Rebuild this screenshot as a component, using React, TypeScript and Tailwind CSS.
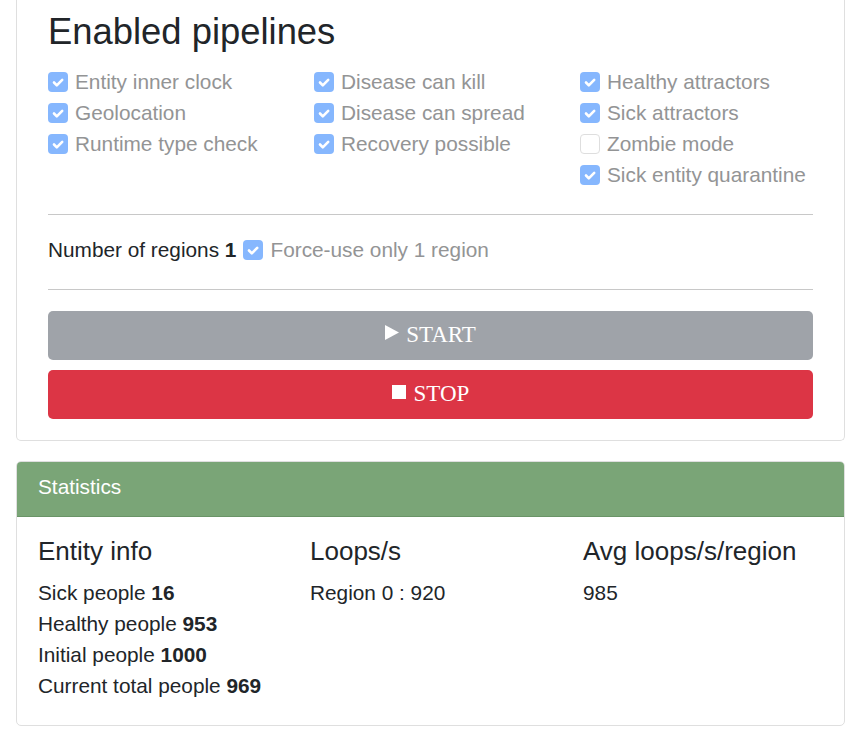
import React from 'react';

const pipelines: { label: string; checked: boolean }[][] = [
  [
    { label: 'Entity inner clock', checked: true },
    { label: 'Geolocation', checked: true },
    { label: 'Runtime type check', checked: true },
  ],
  [
    { label: 'Disease can kill', checked: true },
    { label: 'Disease can spread', checked: true },
    { label: 'Recovery possible', checked: true },
  ],
  [
    { label: 'Healthy attractors', checked: true },
    { label: 'Sick attractors', checked: true },
    { label: 'Zombie mode', checked: false },
    { label: 'Sick entity quarantine', checked: true },
  ],
];

function Check({ checked }: { checked: boolean }) {
  if (!checked) {
    return <span className="w-5 h-5 shrink-0 rounded-[4px] border border-[#dedede] bg-white" />;
  }
  return (
    <span className="w-5 h-5 shrink-0 rounded-[4px] bg-[#86b7fe] flex items-center justify-center">
      <svg width="20" height="20" viewBox="0 0 20 20">
        <path d="M6 10.5l2.8 2.8l5.4-5.4" fill="none" stroke="#fff" strokeWidth="2.6" strokeLinecap="round" strokeLinejoin="round" />
      </svg>
    </span>
  );
}

function CheckRow({ label, checked }: { label: string; checked: boolean }) {
  return (
    <div className="flex items-center h-[31px] gap-[7px]">
      <Check checked={checked} />
      <span className="text-[#939495] text-[20.8px] leading-[31px] whitespace-nowrap">{label}</span>
    </div>
  );
}

function StatLine({ label, value }: { label: string; value: string }) {
  return (
    <p className="text-[20.8px] leading-[31px] text-[#212529]">
      {label} <b className="font-bold">{value}</b>
    </p>
  );
}

export default function App() {
  return (
    <div className="min-h-[738px] bg-white font-['Liberation_Sans',Arial,sans-serif] text-[#212529]">
      {/* Controls card (top edge scrolled away) */}
      <div className="ml-4 w-[829px] border border-t-0 border-[#dfdfdf] rounded-b-[5px] px-[31px] pt-[10px] pb-[21px]">
        <h3 className="text-[36.4px] leading-[44px] font-normal">Enabled pipelines</h3>

        <div className="mt-[12px] grid grid-cols-[266px_266px_1fr]">
          {pipelines.map((col, i) => (
            <div key={i} className="flex flex-col">
              {col.map((p) => (
                <CheckRow key={p.label} label={p.label} checked={p.checked} />
              ))}
            </div>
          ))}
        </div>

        <hr className="mt-[24px] border-0 border-t border-[#c8c8c8]" />

        <div className="mt-[19px] flex items-center h-[31px] text-[20.8px]">
          <span className="whitespace-nowrap">
            Number of regions <b className="font-bold">1</b>
          </span>
          <span className="ml-[7px] flex items-center gap-[7px]">
            <Check checked />
            <span className="text-[#939495] whitespace-nowrap">Force-use only 1 region</span>
          </span>
        </div>

        <hr className="mt-[24px] border-0 border-t border-[#c8c8c8]" />

        <div className="mt-[21px] flex flex-col gap-[10px] font-['Liberation_Serif','Times_New_Roman',serif] text-white text-[23px]">
          <button className="h-[49px] w-full rounded-[5px] bg-[#9fa3a9] flex items-center justify-center gap-[7px]">
            <svg width="14" height="15" viewBox="0 0 14 15" className="-mt-[7px]">
              <path d="M0 0L14 7.5L0 15Z" fill="#fff" />
            </svg>
            <span>START</span>
          </button>
          <button className="h-[49px] w-full rounded-[5px] bg-[#dc3545] flex items-center justify-center gap-[8px]">
            <svg width="14" height="14" viewBox="0 0 14 14" className="-mt-[6px]">
              <rect x="0" y="0" width="14" height="14" fill="#fff" />
            </svg>
            <span>STOP</span>
          </button>
        </div>
      </div>

      {/* Statistics card */}
      <div className="ml-4 mt-[20px] w-[829px] border border-[#dfdfdf] rounded-[5px] overflow-hidden">
        <div className="h-[55px] bg-[#7aa577] border-b border-[#6a9467] px-[21px] pb-[4px] flex items-center text-white text-[20.8px]">
          Statistics
        </div>
        <div className="px-[21px] pt-[19px] pb-[24px] grid grid-cols-[272px_273px_1fr]">
          <div>
            <h5 className="text-[26px] leading-[31px] mb-[10px]">Entity info</h5>
            <StatLine label="Sick people" value="16" />
            <StatLine label="Healthy people" value="953" />
            <StatLine label="Initial people" value="1000" />
            <StatLine label="Current total people" value="969" />
          </div>
          <div>
            <h5 className="text-[26px] leading-[31px] mb-[10px]">Loops/s</h5>
            <p className="text-[20.8px] leading-[31px]">Region 0 : 920</p>
          </div>
          <div>
            <h5 className="text-[26px] leading-[31px] mb-[10px]">Avg loops/s/region</h5>
            <p className="text-[20.8px] leading-[31px]">985</p>
          </div>
        </div>
      </div>
    </div>
  );
}
